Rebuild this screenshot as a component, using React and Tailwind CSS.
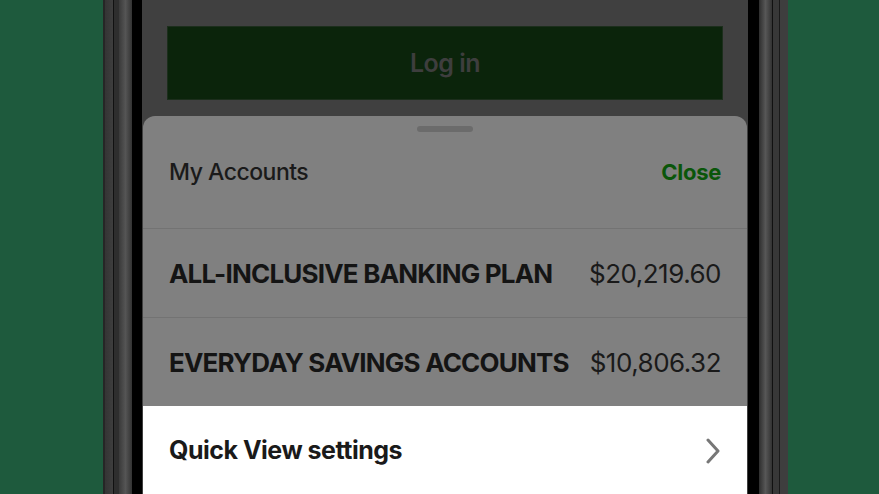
export default function App() {
  const accounts = [
    { name: 'ALL-INCLUSIVE BANKING PLAN', amount: '$20,219.60' },
    { name: 'EVERYDAY SAVINGS ACCOUNTS', amount: '$10,806.32' },
  ];

  return (
    <div
      className="flex h-[494px] w-[879px] overflow-hidden bg-[#1e5a3d]"
      style={{ fontFamily: 'Inter, "Liberation Sans", sans-serif' }}
    >
      {/* green left */}
      <div className="w-[103px] shrink-0" />

      {/* phone frame left */}
      <div className="flex shrink-0">
        <div className="w-[2px] bg-[#262626]" />
        <div className="w-[8px] bg-gradient-to-r from-[#343434] to-[#3e3e3e]" />
        <div className="w-[1px] bg-[#111]" />
        <div className="w-[5px] bg-[#2e2e2e]" />
        <div className="w-[13px] bg-gradient-to-r from-[#3a3a3a] via-[#555] to-[#333]" />
        <div className="w-[10px] bg-black" />
      </div>

      {/* screen */}
      <div className="flex w-[606px] shrink-0 flex-col bg-[#404040]">
        <div className="flex h-[116px] shrink-0 flex-col px-[25px] pt-[26px]">
          <button className="flex h-[74px] w-full items-center justify-center border border-[#1c2e1c] bg-[#0b240b] pt-[2px] text-[25px] font-semibold tracking-[-0.5px] text-[#3e3e3e]">
            Log in
          </button>
        </div>

        <div className="mx-[1px] flex flex-1 flex-col overflow-hidden rounded-t-[12px] bg-[#808080]">
          <div className="flex justify-center pt-[10px]">
            <div className="h-[6px] w-[56px] rounded-full bg-[#6b6b6b]" />
          </div>
          <div className="flex h-[96px] shrink-0 items-center justify-between px-[26px] pb-[16px]">
            <span className="text-[23px] font-medium tracking-[-0.5px] text-[#1a1a1a]">My Accounts</span>
            <span className="text-[22px] font-bold tracking-[-0.3px] text-[#0a560a]">Close</span>
          </div>
          {accounts.map((a) => (
            <div
              key={a.name}
              className="flex h-[89px] shrink-0 items-center justify-between border-t border-[#737373] px-[26px]"
            >
              <span className="text-[26px] font-bold tracking-[-0.8px] text-[#141414]">{a.name}</span>
              <span className="text-[26px] font-normal tracking-[-0.5px] text-[#1a1a1a]">{a.amount}</span>
            </div>
          ))}
          <div className="flex h-[88px] shrink-0 items-center justify-between bg-white px-[26px] pt-[2px]">
            <span className="text-[25px] font-bold tracking-[-0.5px] text-[#1a1a1a]">Quick View settings</span>
            <svg width="16" height="26" viewBox="0 0 16 26">
              <path d="M3 2 L13 13 L3 24" fill="none" stroke="#777" strokeWidth="3" strokeLinecap="round" strokeLinejoin="round" />
            </svg>
          </div>
        </div>
      </div>

      {/* phone frame right */}
      <div className="flex shrink-0">
        <div className="w-[11px] bg-black" />
        <div className="w-[13px] bg-gradient-to-r from-[#2e2e2e] via-[#575757] to-[#333]" />
        <div className="w-[1px] bg-[#111]" />
        <div className="w-[6px] bg-[#383838]" />
        <div className="w-[1px] bg-[#1a1a1a]" />
        <div className="w-[8px] bg-[#3e3e3e]" />
      </div>

      {/* green right */}
      <div className="flex-1" />
    </div>
  );
}
